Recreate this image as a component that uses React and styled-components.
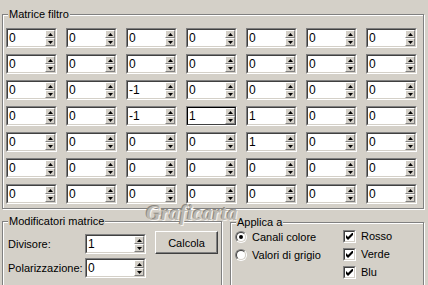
import React from 'react';
import styled, { createGlobalStyle } from 'styled-components';

const GlobalStyle = createGlobalStyle`
  html, body {
    margin: 0;
    padding: 0;
    background: #d4d0c8;
  }
  body {
    font-family: "Liberation Sans", Arial, sans-serif;
    font-size: 11px;
    color: #000;
  }
`;

const Page = styled.div`
  position: relative;
  width: 428px;
  height: 285px;
  overflow: hidden;
  background: #d4d0c8;
  padding: 14px 4px 0 2px;
  box-sizing: border-box;
`;

const Group = styled.div`
  position: relative;
  box-sizing: border-box;
  width: ${(p) => p.$width}px;
  height: ${(p) => p.$height}px;
  margin-top: ${(p) => p.$top || 0}px;
  border: 1px solid #808080;
  box-shadow: inset 1px 1px 0 #fff, 1px 1px 0 #fff;
`;

const Legend = styled.span`
  position: absolute;
  top: -7px;
  left: 5px;
  padding: 0 1px;
  background: #d4d0c8;
  line-height: 13px;
  font-size: 11px;
  white-space: nowrap;
`;

const MatrixGrid = styled.div`
  display: grid;
  grid-template-columns: repeat(7, 51px);
  grid-auto-rows: 20px;
  column-gap: 9px;
  row-gap: 6px;
  padding: 13px 0 0 3px;
`;

const SpinOuter = styled.div`
  box-sizing: border-box;
  width: ${(p) => p.$width}px;
  height: 20px;
  display: flex;
  border: 1px solid;
  border-color: #808080 #fff #fff #808080;
  background: #fff;
`;

const SpinInner = styled.div`
  flex: 1;
  display: flex;
  border: 1px solid;
  border-color: ${(p) =>
    p.$focused ? '#000 #404040 #404040 #000' : '#404040 #d4d0c8 #d4d0c8 #404040'};
`;

const SpinValue = styled.div`
  flex: 1;
  display: flex;
  align-items: center;
  padding-left: 1px;
  font-size: 12px;
  line-height: 14px;
  overflow: hidden;
`;

const SpinButtons = styled.div`
  width: 10px;
  display: flex;
  flex-direction: column;
`;

const SpinButton = styled.div`
  flex: 1;
  box-sizing: border-box;
  display: flex;
  align-items: center;
  justify-content: center;
  background: #d4d0c8;
  border: 1px solid;
  border-color: #fff #808080 #808080 #fff;
`;

const Arrow = ({ down }) => (
  <svg width="5" height="3" viewBox="0 0 5 3" style={{ display: 'block' }}>
    <polygon points={down ? '0,0 5,0 2.5,3' : '2.5,0 5,3 0,3'} fill="#000" />
  </svg>
);

const Spin = ({ value, width = 51, focused }) => (
  <SpinOuter $width={width}>
    <SpinInner $focused={focused}>
      <SpinValue>{value}</SpinValue>
      <SpinButtons>
        <SpinButton><Arrow /></SpinButton>
        <SpinButton><Arrow down /></SpinButton>
      </SpinButtons>
    </SpinInner>
  </SpinOuter>
);

const BottomRow = styled.div`
  display: flex;
  gap: 8px;
  align-items: flex-start;
  margin-top: 12px;
`;

const ModBody = styled.div`
  display: flex;
  gap: 9px;
  align-items: flex-start;
  padding: 9px 0 0 5px;
`;

const FieldRows = styled.div`
  display: flex;
  flex-direction: column;
  gap: 4px;
  margin-top: 3px;
`;

const FieldRow = styled.div`
  display: flex;
  align-items: center;
`;

const FieldLabel = styled.span`
  width: 77px;
  font-size: 11px;
`;

const Button = styled.div`
  box-sizing: border-box;
  width: 63px;
  height: 23px;
  display: flex;
  align-items: center;
  justify-content: center;
  font-size: 11px;
  background: #d4d0c8;
  border: 1px solid;
  border-color: #fff #404040 #404040 #fff;
  box-shadow: inset -1px -1px 0 #808080;
`;

const ApplyBody = styled.div`
  display: flex;
  padding: 4px 0 0 4px;
`;

const OptionColumn = styled.div`
  width: ${(p) => p.$width}px;
  display: flex;
  flex-direction: column;
  margin-top: ${(p) => p.$top || 0}px;
`;

const Option = styled.div`
  height: 18px;
  display: flex;
  align-items: center;
  gap: 5px;
  font-size: 11px;
`;

const RadioRing = styled.span`
  box-sizing: border-box;
  width: 12px;
  height: 12px;
  border-radius: 50%;
  border: 1px solid;
  border-color: #808080 #fff #fff #808080;
  display: flex;
`;

const RadioCore = styled.span`
  flex: 1;
  border-radius: 50%;
  border: 1px solid;
  border-color: #404040 #d4d0c8 #d4d0c8 #404040;
  background: #fff;
  display: flex;
  align-items: center;
  justify-content: center;
`;

const RadioDot = styled.span`
  width: 4px;
  height: 4px;
  border-radius: 50%;
  background: #000;
`;

const Radio = ({ checked }) => (
  <RadioRing>
    <RadioCore>{checked && <RadioDot />}</RadioCore>
  </RadioRing>
);

const CheckOuter = styled.span`
  box-sizing: border-box;
  width: 13px;
  height: 13px;
  border: 1px solid;
  border-color: #808080 #fff #fff #808080;
  display: flex;
`;

const CheckInner = styled.span`
  flex: 1;
  border: 1px solid;
  border-color: #404040 #d4d0c8 #d4d0c8 #404040;
  background: #fff;
  display: flex;
  align-items: center;
  justify-content: center;
`;

const Check = () => (
  <CheckOuter>
    <CheckInner>
      <svg width="7" height="7" viewBox="0 0 7 7" style={{ display: 'block' }}>
        <path d="M0 2 L2 4 L7 -1 L7 2 L2 7 L0 5 Z" fill="#000" />
      </svg>
    </CheckInner>
  </CheckOuter>
);

const Watermark = styled.div`
  position: absolute;
  left: 146px;
  top: 204px;
  font-family: "Liberation Serif", "DejaVu Serif", serif;
  font-style: italic;
  font-weight: bold;
  font-size: 20px;
  line-height: 18px;
  letter-spacing: 0.5px;
  color: #bcb8b0;
  text-shadow: 1px 1px 0 #f4f2ee, -1px -1px 0 #8c8982;
  pointer-events: none;
`;

const matrix = [
  [0, 0, 0, 0, 0, 0, 0],
  [0, 0, 0, 0, 0, 0, 0],
  [0, 0, -1, 0, 0, 0, 0],
  [0, 0, -1, 1, 1, 0, 0],
  [0, 0, 0, 0, 1, 0, 0],
  [0, 0, 0, 0, 0, 0, 0],
  [0, 0, 0, 0, 0, 0, 0],
];

export default function App() {
  return (
    <>
      <GlobalStyle />
      <Page>
        <Group $width={422} $height={195}>
          <Legend>Matrice filtro</Legend>
          <MatrixGrid>
            {matrix.map((row, r) =>
              row.map((v, c) => (
                <Spin key={`${r}-${c}`} value={v} focused={r === 3 && c === 3} />
              ))
            )}
          </MatrixGrid>
        </Group>
        <BottomRow>
          <Group $width={221} $height={80}>
            <Legend>Modificatori matrice</Legend>
            <ModBody>
              <FieldRows>
                <FieldRow>
                  <FieldLabel>Divisore:</FieldLabel>
                  <Spin value={1} width={61} />
                </FieldRow>
                <FieldRow>
                  <FieldLabel>Polarizzazione:</FieldLabel>
                  <Spin value={0} width={61} />
                </FieldRow>
              </FieldRows>
              <Button>Calcola</Button>
            </ModBody>
          </Group>
          <Group $width={194} $height={80} $top={1}>
            <Legend>Applica a</Legend>
            <ApplyBody>
              <OptionColumn $width={108} $top={1}>
                <Option><Radio checked />Canali colore</Option>
                <Option><Radio />Valori di grigio</Option>
              </OptionColumn>
              <OptionColumn $width={80}>
                <Option><Check />Rosso</Option>
                <Option><Check />Verde</Option>
                <Option><Check />Blu</Option>
              </OptionColumn>
            </ApplyBody>
          </Group>
        </BottomRow>
        <Watermark>Graficarta</Watermark>
      </Page>
    </>
  );
}
